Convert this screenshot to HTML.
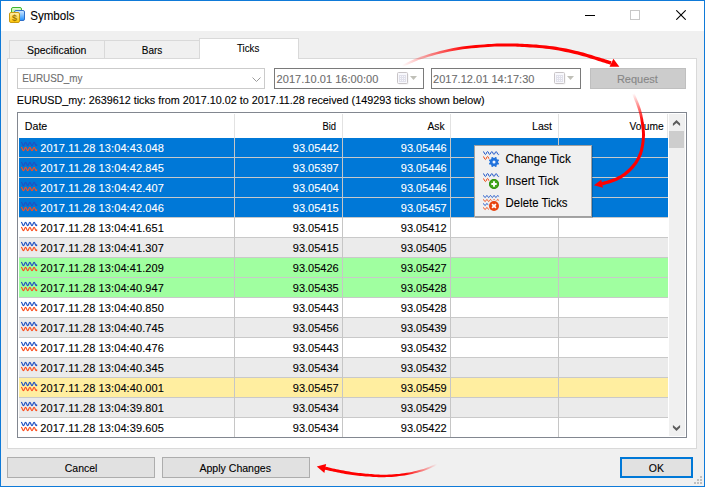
<!DOCTYPE html>
<html><head><meta charset="utf-8"><title>Symbols</title>
<style>
html,body{margin:0;padding:0;}
body{-webkit-text-stroke:0.1px;width:705px;height:487px;overflow:hidden;background:#f0f0f0;position:relative;font-family:"Liberation Sans",sans-serif;font-size:11px;color:#000;}
div,span,svg{position:absolute;box-sizing:border-box;}
.t{white-space:nowrap;line-height:13px;height:13px;}
.t12{white-space:nowrap;font-size:12px;line-height:15px;height:15px;}
#win{left:0;top:0;width:705px;height:487px;border:1px solid #0f7ad8;background:#f0f0f0;}
#titlebar{left:1px;top:1px;width:703px;height:30px;background:#fff;}
#panel{left:7px;top:58px;width:690px;height:391px;background:#fff;border:1px solid #d9d9d9;}
.tab{top:40px;height:19px;border:1px solid #d9d9d9;background:#f0f0f0;}
#tab3{left:199px;top:38px;width:100px;height:21px;background:#fff;border:1px solid #d9d9d9;border-bottom:none;}
#combo{left:17px;top:68px;width:248px;height:21px;border:1px solid #cbcbcb;background:#fff;}
.date{top:68px;width:150px;height:21px;border:1px solid #7a7a7a;background:#fff;}
.grey{color:#6d6d6d;}
#req{left:590px;top:68px;width:96px;height:21px;background:#cccccc;border:1px solid #bfbfbf;}
#table{left:17px;top:112px;width:670px;height:326px;border:1px solid #828790;background:#fff;}
.row{left:19px;width:649px;height:19px;}
.row.sel{background:#0078d7;color:#fff;}
.row.w{background:#fff;}
.row.g{background:#ebebeb;}
.row.grn{background:#a0ffa0;}
.row.yel{background:#ffeea0;}
.hl{left:19px;width:649px;height:1px;background:#c9c9c9;}
.vl{top:138px;width:1px;height:299px;background:#c6c6c6;}
.vh{top:114px;width:1px;height:24px;background:#e2e2e2;}
.wv{left:2px;top:0px;}
.c{line-height:13px;height:13px;white-space:nowrap;}
.c.rd{left:21px;top:4px;letter-spacing:0.1px;transform:translateX(0.20px) scaleX(1);transform-origin:0 0;}
.c.rb{left:273px;top:4px;letter-spacing:0px;transform:translateX(0.80px) scaleX(1);transform-origin:0 0;}
.c.ra{left:381px;top:4px;letter-spacing:0px;transform:translateX(0.80px) scaleX(1);transform-origin:0 0;}
.btn{top:457px;height:21px;background:#e1e1e1;border:1px solid #adadad;}
#menu{left:474px;top:145px;width:118px;height:72px;background:#f0f0f0;border:1px solid #a0a0a0;box-shadow:1px 1px 0 rgba(0,0,0,0.18);}
.mic{left:8px;}
</style></head><body>
<div id="win"></div>
<div id="titlebar"></div>
<svg style="left:9px;top:7px" width="17" height="17" viewBox="0 0 17 17">
 <defs>
  <linearGradient id="gg" x1="0" y1="0" x2="0" y2="1"><stop offset="0" stop-color="#e8ffd8"/><stop offset="1" stop-color="#7fd85f"/></linearGradient>
  <linearGradient id="gb" x1="0" y1="0" x2="0" y2="1"><stop offset="0" stop-color="#d8ecff"/><stop offset="1" stop-color="#1e90ff"/></linearGradient>
  <linearGradient id="gy" x1="0" y1="0" x2="0" y2="1"><stop offset="0" stop-color="#fff0b0"/><stop offset="1" stop-color="#ffc400"/></linearGradient>
 </defs>
 <rect x="2.5" y="0.5" width="10" height="9" rx="1.5" fill="url(#gg)" stroke="#3fb52f"/>
 <rect x="5.5" y="3.5" width="10" height="10" rx="1.5" fill="url(#gb)" stroke="#2f6fc8"/>
 <rect x="0.5" y="5.5" width="10" height="10" rx="1.5" fill="url(#gy)" stroke="#c89a10"/>
 <text x="5.5" y="13.6" font-family="Liberation Sans, sans-serif" font-size="9" font-weight="bold" fill="#a07800" text-anchor="middle">$</text>
</svg>
<div class="t12" id="title" style="left:30px;top:9px;letter-spacing:0px;transform:translateX(0.20px) scaleX(0.9641);transform-origin:0 0;">Symbols</div>
<svg style="left:585px;top:10px" width="55" height="10" viewBox="0 0 55 10" shape-rendering="crispEdges">
 <rect x="0" y="5" width="10" height="1" fill="#000"/>
 <rect x="45.5" y="0.5" width="9" height="9" fill="none" stroke="#c8c8c8"/>
</svg>
<svg style="left:676px;top:10px" width="10" height="10" viewBox="0 0 10 10">
 <path d="M0.3 0.3 L9.7 9.7 M9.7 0.3 L0.3 9.7" stroke="#000" stroke-width="1.1" fill="none"/>
</svg>

<div id="panel"></div>
<div class="tab" id="tab1" style="left:9px;width:96px"></div>
<div class="tab" id="tab2" style="left:104px;width:96px"></div>
<div id="tab3"></div>
<span class="t" id="spec" style="left:27px;top:44px;letter-spacing:0px;transform:translateX(0.00px) scaleX(0.9516);transform-origin:0 0;">Specification</span>
<span class="t" id="bars" style="left:141px;top:44px;letter-spacing:0px;transform:translateX(0.80px) scaleX(0.9087);transform-origin:0 0;">Bars</span>
<span class="t" id="ticks" style="left:237px;top:42px;letter-spacing:0px;transform:translateX(0.00px) scaleX(0.88);transform-origin:0 0;">Ticks</span>

<div id="combo">
<svg style="left:234px;top:8px" width="9" height="5" viewBox="0 0 9 5"><path d="M0.5 0.5 L4.5 4.5 L8.5 0.5" fill="none" stroke="#9a9a9a" stroke-width="1"/></svg>
</div>
<span class="t grey" id="combot" style="left:22px;top:72px;letter-spacing:0px;transform:translateX(0.20px) scaleX(0.897);transform-origin:0 0;">EURUSD_my</span>
<div class="date" style="left:274px"><svg style="left:122px;top:3px" width="22" height="13" viewBox="0 0 22 13"><rect x="1.5" y="1.5" width="10" height="11" rx="1" fill="#e4e4e4" opacity="0.6"/><rect x="0.5" y="0.5" width="10" height="11" rx="1" fill="#f8f8fc" stroke="#c8c4c6"/><path d="M2.5 3v7M4.5 3v7M6.5 3v7M8.5 3v7M2 3.5h7M2 5.5h7M2 7.5h7M2 9.5h7" stroke="#e0e0ea" stroke-width="1" fill="none"/><path d="M13 4 L20 4 L16.5 8 Z" fill="#c0c0b8"/></svg></div>
<div class="date" style="left:431px"><svg style="left:122px;top:3px" width="22" height="13" viewBox="0 0 22 13"><rect x="1.5" y="1.5" width="10" height="11" rx="1" fill="#e4e4e4" opacity="0.6"/><rect x="0.5" y="0.5" width="10" height="11" rx="1" fill="#f8f8fc" stroke="#c8c4c6"/><path d="M2.5 3v7M4.5 3v7M6.5 3v7M8.5 3v7M2 3.5h7M2 5.5h7M2 7.5h7M2 9.5h7" stroke="#e0e0ea" stroke-width="1" fill="none"/><path d="M13 4 L20 4 L16.5 8 Z" fill="#c0c0b8"/></svg></div>
<span class="t grey" id="date1" style="left:276px;top:73px;letter-spacing:0.044px;transform:translateX(0.60px) scaleX(1);transform-origin:0 0;">2017.10.01 16:00:00</span>
<span class="t grey" id="date2" style="left:433px;top:73px;letter-spacing:0.028px;">2017.12.01 14:17:30</span>
<div id="req"></div>
<span class="t" id="reqt" style="left:616px;top:73px;letter-spacing:0px;transform:translateX(0.90px) scaleX(1);transform-origin:0 0;color:#868686;">Request</span>
<div class="t" id="info" style="left:16px;top:94px;letter-spacing:0px;transform:translateX(0.80px) scaleX(0.98);transform-origin:0 0;">EURUSD_my: 2639612 ticks from 2017.10.02 to 2017.11.28 received (149293 ticks shown below)</div>

<div id="table"></div>
<span class="t" id="hDate" style="left:24px;top:120px;letter-spacing:0px;transform:translateX(0.80px) scaleX(0.9674);transform-origin:0 0;">Date</span>
<span class="t" id="hBid" style="left:322px;top:120px;letter-spacing:0px;transform:translateX(0.40px) scaleX(0.8563);transform-origin:0 0;">Bid</span>
<span class="t" id="hAsk" style="left:427px;top:120px;letter-spacing:0px;transform:translateX(0.40px) scaleX(0.9361);transform-origin:0 0;">Ask</span>
<span class="t" id="hLast" style="left:532px;top:120px;letter-spacing:0px;transform:translateX(0.00px) scaleX(0.9619);transform-origin:0 0;">Last</span>
<span class="t" id="hVol" style="left:629px;top:120px;letter-spacing:0px;transform:translateX(0.50px) scaleX(0.93);transform-origin:0 0;">Volume</span>
<div class="row sel" style="top:138px"><svg class="wv" width="17" height="16" viewBox="0 0 17 16"><path d="M0.30 4.45 C1.26 4.45 1.47 7.55 2.43 7.55 C3.40 7.55 3.61 4.45 4.57 4.45 C5.53 4.45 5.74 7.55 6.70 7.55 C7.67 7.55 7.88 4.45 8.84 4.45 C9.80 4.45 10.01 7.55 10.97 7.55 C11.94 7.55 12.15 4.45 13.11 4.45 C14.07 4.45 14.28 7.55 15.24 7.55 C16.21 7.55 15.50 6.89 15.70 6.89" fill="none" stroke="#2052c2" stroke-width="1.18" stroke-linecap="round"/><path d="M0.30 9.45 C1.26 9.45 1.47 12.55 2.43 12.55 C3.40 12.55 3.61 9.45 4.57 9.45 C5.53 9.45 5.74 12.55 6.70 12.55 C7.67 12.55 7.88 9.45 8.84 9.45 C9.80 9.45 10.01 12.55 10.97 12.55 C11.94 12.55 12.15 9.45 13.11 9.45 C14.07 9.45 14.28 12.55 15.24 12.55 C16.21 12.55 15.50 11.89 15.70 11.89" fill="none" stroke="#fb4e1e" stroke-width="1.18" stroke-linecap="round"/></svg><span class="c rd">2017.11.28 13:04:43.048</span><span class="c rb">93.05442</span><span class="c ra">93.05446</span></div>
<div class="row sel" style="top:158px"><svg class="wv" width="17" height="16" viewBox="0 0 17 16"><path d="M0.30 4.45 C1.26 4.45 1.47 7.55 2.43 7.55 C3.40 7.55 3.61 4.45 4.57 4.45 C5.53 4.45 5.74 7.55 6.70 7.55 C7.67 7.55 7.88 4.45 8.84 4.45 C9.80 4.45 10.01 7.55 10.97 7.55 C11.94 7.55 12.15 4.45 13.11 4.45 C14.07 4.45 14.28 7.55 15.24 7.55 C16.21 7.55 15.50 6.89 15.70 6.89" fill="none" stroke="#2052c2" stroke-width="1.18" stroke-linecap="round"/><path d="M0.30 9.45 C1.26 9.45 1.47 12.55 2.43 12.55 C3.40 12.55 3.61 9.45 4.57 9.45 C5.53 9.45 5.74 12.55 6.70 12.55 C7.67 12.55 7.88 9.45 8.84 9.45 C9.80 9.45 10.01 12.55 10.97 12.55 C11.94 12.55 12.15 9.45 13.11 9.45 C14.07 9.45 14.28 12.55 15.24 12.55 C16.21 12.55 15.50 11.89 15.70 11.89" fill="none" stroke="#fb4e1e" stroke-width="1.18" stroke-linecap="round"/></svg><span class="c rd">2017.11.28 13:04:42.845</span><span class="c rb">93.05397</span><span class="c ra">93.05446</span></div>
<div class="row sel" style="top:178px"><svg class="wv" width="17" height="16" viewBox="0 0 17 16"><path d="M0.30 4.45 C1.26 4.45 1.47 7.55 2.43 7.55 C3.40 7.55 3.61 4.45 4.57 4.45 C5.53 4.45 5.74 7.55 6.70 7.55 C7.67 7.55 7.88 4.45 8.84 4.45 C9.80 4.45 10.01 7.55 10.97 7.55 C11.94 7.55 12.15 4.45 13.11 4.45 C14.07 4.45 14.28 7.55 15.24 7.55 C16.21 7.55 15.50 6.89 15.70 6.89" fill="none" stroke="#2052c2" stroke-width="1.18" stroke-linecap="round"/><path d="M0.30 9.45 C1.26 9.45 1.47 12.55 2.43 12.55 C3.40 12.55 3.61 9.45 4.57 9.45 C5.53 9.45 5.74 12.55 6.70 12.55 C7.67 12.55 7.88 9.45 8.84 9.45 C9.80 9.45 10.01 12.55 10.97 12.55 C11.94 12.55 12.15 9.45 13.11 9.45 C14.07 9.45 14.28 12.55 15.24 12.55 C16.21 12.55 15.50 11.89 15.70 11.89" fill="none" stroke="#fb4e1e" stroke-width="1.18" stroke-linecap="round"/></svg><span class="c rd">2017.11.28 13:04:42.407</span><span class="c rb">93.05404</span><span class="c ra">93.05446</span></div>
<div class="row sel" style="top:198px"><svg class="wv" width="17" height="16" viewBox="0 0 17 16"><path d="M0.30 4.45 C1.26 4.45 1.47 7.55 2.43 7.55 C3.40 7.55 3.61 4.45 4.57 4.45 C5.53 4.45 5.74 7.55 6.70 7.55 C7.67 7.55 7.88 4.45 8.84 4.45 C9.80 4.45 10.01 7.55 10.97 7.55 C11.94 7.55 12.15 4.45 13.11 4.45 C14.07 4.45 14.28 7.55 15.24 7.55 C16.21 7.55 15.50 6.89 15.70 6.89" fill="none" stroke="#2052c2" stroke-width="1.18" stroke-linecap="round"/><path d="M0.30 9.45 C1.26 9.45 1.47 12.55 2.43 12.55 C3.40 12.55 3.61 9.45 4.57 9.45 C5.53 9.45 5.74 12.55 6.70 12.55 C7.67 12.55 7.88 9.45 8.84 9.45 C9.80 9.45 10.01 12.55 10.97 12.55 C11.94 12.55 12.15 9.45 13.11 9.45 C14.07 9.45 14.28 12.55 15.24 12.55 C16.21 12.55 15.50 11.89 15.70 11.89" fill="none" stroke="#fb4e1e" stroke-width="1.18" stroke-linecap="round"/></svg><span class="c rd">2017.11.28 13:04:42.046</span><span class="c rb">93.05415</span><span class="c ra">93.05457</span></div>
<div class="row w" style="top:218px"><svg class="wv" width="17" height="16" viewBox="0 0 17 16"><path d="M0.30 4.45 C1.26 4.45 1.47 7.55 2.43 7.55 C3.40 7.55 3.61 4.45 4.57 4.45 C5.53 4.45 5.74 7.55 6.70 7.55 C7.67 7.55 7.88 4.45 8.84 4.45 C9.80 4.45 10.01 7.55 10.97 7.55 C11.94 7.55 12.15 4.45 13.11 4.45 C14.07 4.45 14.28 7.55 15.24 7.55 C16.21 7.55 15.50 6.89 15.70 6.89" fill="none" stroke="#2052c2" stroke-width="1.18" stroke-linecap="round"/><path d="M0.30 9.45 C1.26 9.45 1.47 12.55 2.43 12.55 C3.40 12.55 3.61 9.45 4.57 9.45 C5.53 9.45 5.74 12.55 6.70 12.55 C7.67 12.55 7.88 9.45 8.84 9.45 C9.80 9.45 10.01 12.55 10.97 12.55 C11.94 12.55 12.15 9.45 13.11 9.45 C14.07 9.45 14.28 12.55 15.24 12.55 C16.21 12.55 15.50 11.89 15.70 11.89" fill="none" stroke="#fb4e1e" stroke-width="1.18" stroke-linecap="round"/></svg><span class="c rd">2017.11.28 13:04:41.651</span><span class="c rb">93.05415</span><span class="c ra">93.05412</span></div>
<div class="row g" style="top:238px"><svg class="wv" width="17" height="16" viewBox="0 0 17 16"><path d="M0.30 4.45 C1.26 4.45 1.47 7.55 2.43 7.55 C3.40 7.55 3.61 4.45 4.57 4.45 C5.53 4.45 5.74 7.55 6.70 7.55 C7.67 7.55 7.88 4.45 8.84 4.45 C9.80 4.45 10.01 7.55 10.97 7.55 C11.94 7.55 12.15 4.45 13.11 4.45 C14.07 4.45 14.28 7.55 15.24 7.55 C16.21 7.55 15.50 6.89 15.70 6.89" fill="none" stroke="#2052c2" stroke-width="1.18" stroke-linecap="round"/><path d="M0.30 9.45 C1.26 9.45 1.47 12.55 2.43 12.55 C3.40 12.55 3.61 9.45 4.57 9.45 C5.53 9.45 5.74 12.55 6.70 12.55 C7.67 12.55 7.88 9.45 8.84 9.45 C9.80 9.45 10.01 12.55 10.97 12.55 C11.94 12.55 12.15 9.45 13.11 9.45 C14.07 9.45 14.28 12.55 15.24 12.55 C16.21 12.55 15.50 11.89 15.70 11.89" fill="none" stroke="#fb4e1e" stroke-width="1.18" stroke-linecap="round"/></svg><span class="c rd">2017.11.28 13:04:41.307</span><span class="c rb">93.05415</span><span class="c ra">93.05405</span></div>
<div class="row grn" style="top:258px"><svg class="wv" width="17" height="16" viewBox="0 0 17 16"><path d="M0.30 4.45 C1.26 4.45 1.47 7.55 2.43 7.55 C3.40 7.55 3.61 4.45 4.57 4.45 C5.53 4.45 5.74 7.55 6.70 7.55 C7.67 7.55 7.88 4.45 8.84 4.45 C9.80 4.45 10.01 7.55 10.97 7.55 C11.94 7.55 12.15 4.45 13.11 4.45 C14.07 4.45 14.28 7.55 15.24 7.55 C16.21 7.55 15.50 6.89 15.70 6.89" fill="none" stroke="#2052c2" stroke-width="1.18" stroke-linecap="round"/><path d="M0.30 9.45 C1.26 9.45 1.47 12.55 2.43 12.55 C3.40 12.55 3.61 9.45 4.57 9.45 C5.53 9.45 5.74 12.55 6.70 12.55 C7.67 12.55 7.88 9.45 8.84 9.45 C9.80 9.45 10.01 12.55 10.97 12.55 C11.94 12.55 12.15 9.45 13.11 9.45 C14.07 9.45 14.28 12.55 15.24 12.55 C16.21 12.55 15.50 11.89 15.70 11.89" fill="none" stroke="#fb4e1e" stroke-width="1.18" stroke-linecap="round"/></svg><span class="c rd">2017.11.28 13:04:41.209</span><span class="c rb">93.05426</span><span class="c ra">93.05427</span></div>
<div class="row grn" style="top:278px"><svg class="wv" width="17" height="16" viewBox="0 0 17 16"><path d="M0.30 4.45 C1.26 4.45 1.47 7.55 2.43 7.55 C3.40 7.55 3.61 4.45 4.57 4.45 C5.53 4.45 5.74 7.55 6.70 7.55 C7.67 7.55 7.88 4.45 8.84 4.45 C9.80 4.45 10.01 7.55 10.97 7.55 C11.94 7.55 12.15 4.45 13.11 4.45 C14.07 4.45 14.28 7.55 15.24 7.55 C16.21 7.55 15.50 6.89 15.70 6.89" fill="none" stroke="#2052c2" stroke-width="1.18" stroke-linecap="round"/><path d="M0.30 9.45 C1.26 9.45 1.47 12.55 2.43 12.55 C3.40 12.55 3.61 9.45 4.57 9.45 C5.53 9.45 5.74 12.55 6.70 12.55 C7.67 12.55 7.88 9.45 8.84 9.45 C9.80 9.45 10.01 12.55 10.97 12.55 C11.94 12.55 12.15 9.45 13.11 9.45 C14.07 9.45 14.28 12.55 15.24 12.55 C16.21 12.55 15.50 11.89 15.70 11.89" fill="none" stroke="#fb4e1e" stroke-width="1.18" stroke-linecap="round"/></svg><span class="c rd">2017.11.28 13:04:40.947</span><span class="c rb">93.05435</span><span class="c ra">93.05428</span></div>
<div class="row w" style="top:298px"><svg class="wv" width="17" height="16" viewBox="0 0 17 16"><path d="M0.30 4.45 C1.26 4.45 1.47 7.55 2.43 7.55 C3.40 7.55 3.61 4.45 4.57 4.45 C5.53 4.45 5.74 7.55 6.70 7.55 C7.67 7.55 7.88 4.45 8.84 4.45 C9.80 4.45 10.01 7.55 10.97 7.55 C11.94 7.55 12.15 4.45 13.11 4.45 C14.07 4.45 14.28 7.55 15.24 7.55 C16.21 7.55 15.50 6.89 15.70 6.89" fill="none" stroke="#2052c2" stroke-width="1.18" stroke-linecap="round"/><path d="M0.30 9.45 C1.26 9.45 1.47 12.55 2.43 12.55 C3.40 12.55 3.61 9.45 4.57 9.45 C5.53 9.45 5.74 12.55 6.70 12.55 C7.67 12.55 7.88 9.45 8.84 9.45 C9.80 9.45 10.01 12.55 10.97 12.55 C11.94 12.55 12.15 9.45 13.11 9.45 C14.07 9.45 14.28 12.55 15.24 12.55 C16.21 12.55 15.50 11.89 15.70 11.89" fill="none" stroke="#fb4e1e" stroke-width="1.18" stroke-linecap="round"/></svg><span class="c rd">2017.11.28 13:04:40.850</span><span class="c rb">93.05443</span><span class="c ra">93.05428</span></div>
<div class="row g" style="top:318px"><svg class="wv" width="17" height="16" viewBox="0 0 17 16"><path d="M0.30 4.45 C1.26 4.45 1.47 7.55 2.43 7.55 C3.40 7.55 3.61 4.45 4.57 4.45 C5.53 4.45 5.74 7.55 6.70 7.55 C7.67 7.55 7.88 4.45 8.84 4.45 C9.80 4.45 10.01 7.55 10.97 7.55 C11.94 7.55 12.15 4.45 13.11 4.45 C14.07 4.45 14.28 7.55 15.24 7.55 C16.21 7.55 15.50 6.89 15.70 6.89" fill="none" stroke="#2052c2" stroke-width="1.18" stroke-linecap="round"/><path d="M0.30 9.45 C1.26 9.45 1.47 12.55 2.43 12.55 C3.40 12.55 3.61 9.45 4.57 9.45 C5.53 9.45 5.74 12.55 6.70 12.55 C7.67 12.55 7.88 9.45 8.84 9.45 C9.80 9.45 10.01 12.55 10.97 12.55 C11.94 12.55 12.15 9.45 13.11 9.45 C14.07 9.45 14.28 12.55 15.24 12.55 C16.21 12.55 15.50 11.89 15.70 11.89" fill="none" stroke="#fb4e1e" stroke-width="1.18" stroke-linecap="round"/></svg><span class="c rd">2017.11.28 13:04:40.745</span><span class="c rb">93.05456</span><span class="c ra">93.05439</span></div>
<div class="row w" style="top:338px"><svg class="wv" width="17" height="16" viewBox="0 0 17 16"><path d="M0.30 4.45 C1.26 4.45 1.47 7.55 2.43 7.55 C3.40 7.55 3.61 4.45 4.57 4.45 C5.53 4.45 5.74 7.55 6.70 7.55 C7.67 7.55 7.88 4.45 8.84 4.45 C9.80 4.45 10.01 7.55 10.97 7.55 C11.94 7.55 12.15 4.45 13.11 4.45 C14.07 4.45 14.28 7.55 15.24 7.55 C16.21 7.55 15.50 6.89 15.70 6.89" fill="none" stroke="#2052c2" stroke-width="1.18" stroke-linecap="round"/><path d="M0.30 9.45 C1.26 9.45 1.47 12.55 2.43 12.55 C3.40 12.55 3.61 9.45 4.57 9.45 C5.53 9.45 5.74 12.55 6.70 12.55 C7.67 12.55 7.88 9.45 8.84 9.45 C9.80 9.45 10.01 12.55 10.97 12.55 C11.94 12.55 12.15 9.45 13.11 9.45 C14.07 9.45 14.28 12.55 15.24 12.55 C16.21 12.55 15.50 11.89 15.70 11.89" fill="none" stroke="#fb4e1e" stroke-width="1.18" stroke-linecap="round"/></svg><span class="c rd">2017.11.28 13:04:40.476</span><span class="c rb">93.05443</span><span class="c ra">93.05432</span></div>
<div class="row g" style="top:358px"><svg class="wv" width="17" height="16" viewBox="0 0 17 16"><path d="M0.30 4.45 C1.26 4.45 1.47 7.55 2.43 7.55 C3.40 7.55 3.61 4.45 4.57 4.45 C5.53 4.45 5.74 7.55 6.70 7.55 C7.67 7.55 7.88 4.45 8.84 4.45 C9.80 4.45 10.01 7.55 10.97 7.55 C11.94 7.55 12.15 4.45 13.11 4.45 C14.07 4.45 14.28 7.55 15.24 7.55 C16.21 7.55 15.50 6.89 15.70 6.89" fill="none" stroke="#2052c2" stroke-width="1.18" stroke-linecap="round"/><path d="M0.30 9.45 C1.26 9.45 1.47 12.55 2.43 12.55 C3.40 12.55 3.61 9.45 4.57 9.45 C5.53 9.45 5.74 12.55 6.70 12.55 C7.67 12.55 7.88 9.45 8.84 9.45 C9.80 9.45 10.01 12.55 10.97 12.55 C11.94 12.55 12.15 9.45 13.11 9.45 C14.07 9.45 14.28 12.55 15.24 12.55 C16.21 12.55 15.50 11.89 15.70 11.89" fill="none" stroke="#fb4e1e" stroke-width="1.18" stroke-linecap="round"/></svg><span class="c rd">2017.11.28 13:04:40.345</span><span class="c rb">93.05434</span><span class="c ra">93.05432</span></div>
<div class="row yel" style="top:378px"><svg class="wv" width="17" height="16" viewBox="0 0 17 16"><path d="M0.30 4.45 C1.26 4.45 1.47 7.55 2.43 7.55 C3.40 7.55 3.61 4.45 4.57 4.45 C5.53 4.45 5.74 7.55 6.70 7.55 C7.67 7.55 7.88 4.45 8.84 4.45 C9.80 4.45 10.01 7.55 10.97 7.55 C11.94 7.55 12.15 4.45 13.11 4.45 C14.07 4.45 14.28 7.55 15.24 7.55 C16.21 7.55 15.50 6.89 15.70 6.89" fill="none" stroke="#2052c2" stroke-width="1.18" stroke-linecap="round"/><path d="M0.30 9.45 C1.26 9.45 1.47 12.55 2.43 12.55 C3.40 12.55 3.61 9.45 4.57 9.45 C5.53 9.45 5.74 12.55 6.70 12.55 C7.67 12.55 7.88 9.45 8.84 9.45 C9.80 9.45 10.01 12.55 10.97 12.55 C11.94 12.55 12.15 9.45 13.11 9.45 C14.07 9.45 14.28 12.55 15.24 12.55 C16.21 12.55 15.50 11.89 15.70 11.89" fill="none" stroke="#fb4e1e" stroke-width="1.18" stroke-linecap="round"/></svg><span class="c rd">2017.11.28 13:04:40.001</span><span class="c rb">93.05457</span><span class="c ra">93.05459</span></div>
<div class="row g" style="top:398px"><svg class="wv" width="17" height="16" viewBox="0 0 17 16"><path d="M0.30 4.45 C1.26 4.45 1.47 7.55 2.43 7.55 C3.40 7.55 3.61 4.45 4.57 4.45 C5.53 4.45 5.74 7.55 6.70 7.55 C7.67 7.55 7.88 4.45 8.84 4.45 C9.80 4.45 10.01 7.55 10.97 7.55 C11.94 7.55 12.15 4.45 13.11 4.45 C14.07 4.45 14.28 7.55 15.24 7.55 C16.21 7.55 15.50 6.89 15.70 6.89" fill="none" stroke="#2052c2" stroke-width="1.18" stroke-linecap="round"/><path d="M0.30 9.45 C1.26 9.45 1.47 12.55 2.43 12.55 C3.40 12.55 3.61 9.45 4.57 9.45 C5.53 9.45 5.74 12.55 6.70 12.55 C7.67 12.55 7.88 9.45 8.84 9.45 C9.80 9.45 10.01 12.55 10.97 12.55 C11.94 12.55 12.15 9.45 13.11 9.45 C14.07 9.45 14.28 12.55 15.24 12.55 C16.21 12.55 15.50 11.89 15.70 11.89" fill="none" stroke="#fb4e1e" stroke-width="1.18" stroke-linecap="round"/></svg><span class="c rd">2017.11.28 13:04:39.801</span><span class="c rb">93.05434</span><span class="c ra">93.05429</span></div>
<div class="row w" style="top:418px"><svg class="wv" width="17" height="16" viewBox="0 0 17 16"><path d="M0.30 4.45 C1.26 4.45 1.47 7.55 2.43 7.55 C3.40 7.55 3.61 4.45 4.57 4.45 C5.53 4.45 5.74 7.55 6.70 7.55 C7.67 7.55 7.88 4.45 8.84 4.45 C9.80 4.45 10.01 7.55 10.97 7.55 C11.94 7.55 12.15 4.45 13.11 4.45 C14.07 4.45 14.28 7.55 15.24 7.55 C16.21 7.55 15.50 6.89 15.70 6.89" fill="none" stroke="#2052c2" stroke-width="1.18" stroke-linecap="round"/><path d="M0.30 9.45 C1.26 9.45 1.47 12.55 2.43 12.55 C3.40 12.55 3.61 9.45 4.57 9.45 C5.53 9.45 5.74 12.55 6.70 12.55 C7.67 12.55 7.88 9.45 8.84 9.45 C9.80 9.45 10.01 12.55 10.97 12.55 C11.94 12.55 12.15 9.45 13.11 9.45 C14.07 9.45 14.28 12.55 15.24 12.55 C16.21 12.55 15.50 11.89 15.70 11.89" fill="none" stroke="#fb4e1e" stroke-width="1.18" stroke-linecap="round"/></svg><span class="c rd">2017.11.28 13:04:39.605</span><span class="c rb">93.05434</span><span class="c ra">93.05422</span></div>
<div class="hl" style="top:157px"></div>
<div class="hl" style="top:177px"></div>
<div class="hl" style="top:197px"></div>
<div class="hl" style="top:217px"></div>
<div class="hl" style="top:237px"></div>
<div class="hl" style="top:257px"></div>
<div class="hl" style="top:277px"></div>
<div class="hl" style="top:297px"></div>
<div class="hl" style="top:317px"></div>
<div class="hl" style="top:337px"></div>
<div class="hl" style="top:357px"></div>
<div class="hl" style="top:377px"></div>
<div class="hl" style="top:397px"></div>
<div class="hl" style="top:417px"></div>
<div class="vl" style="left:234px"></div>
<div class="vl" style="left:342px"></div>
<div class="vl" style="left:450px"></div>
<div class="vl" style="left:558px"></div>
<div class="vh" style="left:234px"></div>
<div class="vh" style="left:342px"></div>
<div class="vh" style="left:450px"></div>
<div class="vh" style="left:558px"></div>
<div class="vh" style="left:667px;background:#e5e5e5"></div>
<div id="sb" style="left:669px;top:114px;width:16px;height:322px;background:#f0f0f0"></div>
<div id="thumb" style="left:669px;top:131px;width:15px;height:17px;background:#cdcdcd"></div>
<svg style="left:672px;top:119px" width="9" height="8" viewBox="0 0 9 8"><path d="M4.5 0.9 L8.1 4.5 L8.1 6.9 L4.5 4.1 L0.9 6.9 L0.9 4.5 Z" fill="#5c5c5c"/></svg>
<svg style="left:672px;top:424px" width="9" height="8" viewBox="0 0 9 8"><path d="M4.5 7.1 L8.1 3.5 L8.1 1.1 L4.5 3.9 L0.9 1.1 L0.9 3.5 Z" fill="#5c5c5c"/></svg>

<div id="menu">
<svg class="mic" style="top:5px" width="17" height="17" viewBox="0 0 17 17"><path d="M0.30 0.45 C1.26 0.45 1.47 3.55 2.43 3.55 C3.40 3.55 3.61 0.45 4.57 0.45 C5.53 0.45 5.74 3.55 6.70 3.55 C7.67 3.55 7.88 0.45 8.84 0.45 C9.80 0.45 10.01 3.55 10.97 3.55 C11.94 3.55 12.15 0.45 13.11 0.45 C14.07 0.45 14.28 3.55 15.24 3.55 C16.21 3.55 15.50 2.89 15.70 2.89" fill="none" stroke="#2b5fcb" stroke-width="1.0" stroke-linecap="round"/><path d="M0.30 5.45 C1.26 5.45 1.47 8.55 2.43 8.55 C3.40 8.55 3.61 5.45 4.57 5.45 C5.53 5.45 5.69 8.40 6.60 8.40" fill="none" stroke="#f0541e" stroke-width="1.0" stroke-linecap="round"/><circle cx="11" cy="11" r="5.9" fill="#f0f0f0"/><path d="M16.07 12.15 L15.40 13.77 L14.16 13.62 L13.62 14.16 L13.77 15.40 L12.15 16.07 L11.38 15.08 L10.62 15.08 L9.85 16.07 L8.23 15.40 L8.38 14.16 L7.84 13.62 L6.60 13.77 L5.93 12.15 L6.92 11.38 L6.92 10.62 L5.93 9.85 L6.60 8.23 L7.84 8.38 L8.38 7.84 L8.23 6.60 L9.85 5.93 L10.62 6.92 L11.38 6.92 L12.15 5.93 L13.77 6.60 L13.62 7.84 L14.16 8.38 L15.40 8.23 L16.07 9.85 L15.08 10.62 L15.08 11.38Z" fill="#2273dc"/><circle cx="11" cy="11" r="1.5" fill="#eef4ff"/></svg><svg class="mic" style="top:27px" width="17" height="17" viewBox="0 0 17 17"><path d="M0.30 0.45 C1.26 0.45 1.47 3.55 2.43 3.55 C3.40 3.55 3.61 0.45 4.57 0.45 C5.53 0.45 5.74 3.55 6.70 3.55 C7.67 3.55 7.88 0.45 8.84 0.45 C9.80 0.45 10.01 3.55 10.97 3.55 C11.94 3.55 12.15 0.45 13.11 0.45 C14.07 0.45 14.28 3.55 15.24 3.55 C16.21 3.55 15.50 2.89 15.70 2.89" fill="none" stroke="#2b5fcb" stroke-width="1.0" stroke-linecap="round"/><path d="M0.30 5.45 C1.26 5.45 1.47 8.55 2.43 8.55 C3.40 8.55 3.61 5.45 4.57 5.45 C5.53 5.45 5.69 8.40 6.60 8.40" fill="none" stroke="#f0541e" stroke-width="1.0" stroke-linecap="round"/><circle cx="11" cy="11" r="5.9" fill="#f0f0f0"/><circle cx="11" cy="11" r="5" fill="#43a81c"/><circle cx="11" cy="11" r="4.5" fill="none" stroke="#348f12" stroke-width="1"/><path d="M11 8.3v5.4M8.3 11h5.4" stroke="#fff" stroke-width="1.9" fill="none"/></svg><svg class="mic" style="top:49px" width="17" height="17" viewBox="0 0 17 17"><path d="M0.30 0.45 C1.11 0.45 1.29 2.55 2.10 2.55 C2.91 2.55 3.09 0.45 3.90 0.45 C4.71 0.45 4.89 2.55 5.70 2.55 C6.51 2.55 6.69 0.45 7.50 0.45 C8.31 0.45 8.49 2.55 9.30 2.55 C10.11 2.55 10.29 0.45 11.10 0.45 C11.91 0.45 12.09 2.55 12.90 2.55 C13.71 2.55 13.89 0.45 14.70 0.45 C15.51 0.45 15.25 1.62 15.70 1.62" fill="none" stroke="#2b5fcb" stroke-width="1.0" stroke-linecap="round"/><path d="M0.30 4.45 C1.11 4.45 1.29 6.55 2.10 6.55 C2.91 6.55 3.09 4.45 3.90 4.45 C4.71 4.45 4.89 6.55 5.70 6.55 C6.51 6.55 6.69 4.45 7.50 4.45 C8.31 4.45 8.49 6.55 9.30 6.55 C10.11 6.55 10.29 4.45 11.10 4.45 C11.91 4.45 12.09 6.55 12.90 6.55 C13.71 6.55 13.89 4.45 14.70 4.45 C15.51 4.45 15.25 5.62 15.70 5.62" fill="none" stroke="#f0541e" stroke-width="1.0" stroke-linecap="round"/><path d="M0.30 8.45 C1.11 8.45 1.29 10.55 2.10 10.55 C2.91 10.55 3.09 8.45 3.90 8.45 C4.71 8.45 4.83 10.43 5.60 10.43" fill="none" stroke="#2b5fcb" stroke-width="1.0" stroke-linecap="round"/><path d="M0.30 12.45 C1.11 12.45 1.29 14.55 2.10 14.55 C2.91 14.55 3.09 12.45 3.90 12.45 C4.71 12.45 4.83 14.43 5.60 14.43" fill="none" stroke="#f0541e" stroke-width="1.0" stroke-linecap="round"/><circle cx="11" cy="11" r="5.9" fill="#f0f0f0"/><circle cx="11" cy="11" r="5" fill="#e8440f"/><path d="M9.1 9.1l3.8 3.8M12.9 9.1l-3.8 3.8" stroke="#fff" stroke-width="1.7" fill="none"/></svg>
</div>
<span class="t12" id="m1" style="left:505px;top:152px;letter-spacing:0px;transform:translateX(0.50px) scaleX(0.98);transform-origin:0 0;">Change Tick</span>
<span class="t12" id="m2" style="left:505px;top:174px;letter-spacing:0px;transform:translateX(0.60px) scaleX(0.975);transform-origin:0 0;">Insert Tick</span>
<span class="t12" id="m3" style="left:505px;top:196px;letter-spacing:0px;transform:translateX(0.60px) scaleX(0.947);transform-origin:0 0;">Delete Ticks</span>

<div class="btn" style="left:7px;width:148px"></div>
<div class="btn" style="left:162px;width:148px"></div>
<div class="btn" style="left:620px;width:73px;border:2px solid #0078d7"></div>
<span class="t" id="cancel" style="left:64px;top:462px;letter-spacing:0px;transform:translateX(0.80px) scaleX(0.9529);transform-origin:0 0;">Cancel</span>
<span class="t" id="apply" style="left:199px;top:462px;letter-spacing:0px;transform:translateX(0.40px) scaleX(0.96);transform-origin:0 0;">Apply Changes</span>
<span class="t" id="ok" style="left:648px;top:462px;letter-spacing:0px;transform:translateX(0.80px) scaleX(0.9531);transform-origin:0 0;">OK</span>
<svg id="arrows" style="left:0;top:0;pointer-events:none" width="705" height="487" viewBox="0 0 705 487"><defs><linearGradient id="ag1" gradientUnits="userSpaceOnUse" x1="402.0" y1="66.0" x2="467.0" y2="47.4"><stop offset="0" stop-color="#ff0000" stop-opacity="0"/><stop offset="1" stop-color="#ff0000" stop-opacity="1"/></linearGradient><linearGradient id="ag2" gradientUnits="userSpaceOnUse" x1="633.3" y1="93.5" x2="642.1" y2="121.6"><stop offset="0" stop-color="#ff0000" stop-opacity="0"/><stop offset="1" stop-color="#ff0000" stop-opacity="1"/></linearGradient><linearGradient id="ag3" gradientUnits="userSpaceOnUse" x1="437.0" y1="464.2" x2="404.3" y2="474.3"><stop offset="0" stop-color="#ff0000" stop-opacity="0"/><stop offset="1" stop-color="#ff0000" stop-opacity="1"/></linearGradient></defs><path d="M402.4 66.9 L405.0 65.8 L407.6 64.7 L410.2 63.5 L412.8 62.4 L415.5 61.3 L418.4 60.1 L421.4 59.0 L424.8 57.9 L428.4 56.8 L432.3 55.7 L436.4 54.6 L440.7 53.6 L445.0 52.6 L449.5 51.6 L453.9 50.7 L458.3 50.0 L462.7 49.3 L467.1 48.8 L471.6 48.3 L476.0 47.9 L480.3 47.5 L484.4 47.3 L488.1 47.0 L491.5 46.8 L494.5 46.6 L497.1 46.5 L499.3 46.5 L501.4 46.4 L503.3 46.4 L505.2 46.4 L507.1 46.5 L509.1 46.5 L511.1 46.5 L513.2 46.6 L515.3 46.6 L517.5 46.7 L519.7 46.8 L522.0 46.9 L524.5 47.0 L527.2 47.2 L530.0 47.4 L532.9 47.6 L536.1 47.8 L539.3 48.0 L542.6 48.3 L545.8 48.7 L549.1 49.0 L552.4 49.5 L555.6 50.0 L558.9 50.6 L562.2 51.2 L565.4 51.9 L568.6 52.6 L571.7 53.2 L574.6 53.9 L577.3 54.6 L579.9 55.2 L582.2 55.9 L584.4 56.5 L586.5 57.1 L588.5 57.8 L590.5 58.4 L592.5 59.0 L594.5 59.6 L596.5 60.3 L598.5 60.9 L600.5 61.5 L602.5 62.2 L604.5 62.8 L606.5 63.4 L608.5 64.0 L610.5 64.7 L611.5 61.3 L609.5 60.7 L607.5 60.1 L605.6 59.5 L603.6 58.8 L601.6 58.2 L599.6 57.6 L597.5 57.0 L595.5 56.4 L593.5 55.7 L591.5 55.1 L589.5 54.5 L587.5 53.9 L585.4 53.3 L583.1 52.6 L580.7 52.0 L578.1 51.3 L575.4 50.7 L572.4 50.0 L569.3 49.3 L566.1 48.6 L562.8 48.0 L559.5 47.4 L556.2 46.8 L552.8 46.3 L549.5 45.9 L546.2 45.5 L542.8 45.2 L539.5 44.9 L536.3 44.6 L533.2 44.4 L530.2 44.2 L527.3 44.1 L524.7 43.9 L522.2 43.8 L519.8 43.7 L517.6 43.6 L515.4 43.6 L513.3 43.5 L511.2 43.5 L509.1 43.5 L507.1 43.5 L505.2 43.5 L503.3 43.5 L501.3 43.5 L499.3 43.5 L496.9 43.6 L494.3 43.7 L491.3 43.9 L488.0 44.1 L484.2 44.4 L480.1 44.7 L475.8 45.1 L471.3 45.5 L466.8 46.0 L462.3 46.6 L457.8 47.3 L453.4 48.1 L448.9 49.0 L444.5 50.0 L440.1 51.1 L435.8 52.2 L431.6 53.3 L427.7 54.5 L424.0 55.7 L420.6 56.8 L417.5 58.0 L414.6 59.1 L411.9 60.3 L409.3 61.5 L406.7 62.7 L404.2 63.9 L401.6 65.1Z" fill="url(#ag1)"/><polygon points="613.4,58.7 619.4,66.7 609.5,66.7" fill="#ff0000"/><path d="M632.2 94.0 L633.0 96.1 L633.9 98.3 L634.7 100.4 L635.6 102.5 L636.4 104.7 L637.1 106.8 L637.9 108.9 L638.5 111.0 L639.1 113.2 L639.6 115.3 L640.0 117.5 L640.4 119.7 L640.7 121.8 L641.0 123.9 L641.3 125.8 L641.5 127.5 L641.7 129.1 L641.8 130.6 L641.9 131.9 L642.0 133.1 L642.0 134.3 L642.0 135.5 L642.0 136.7 L641.9 138.0 L641.7 139.5 L641.6 141.0 L641.4 142.5 L641.2 144.1 L640.9 145.7 L640.6 147.2 L640.3 148.6 L640.0 150.0 L639.6 151.3 L639.3 152.4 L638.8 153.6 L638.4 154.6 L638.0 155.7 L637.5 156.7 L636.9 157.7 L636.4 158.7 L635.8 159.7 L635.2 160.7 L634.6 161.7 L633.9 162.7 L633.2 163.6 L632.4 164.6 L631.6 165.6 L630.7 166.5 L629.8 167.5 L628.8 168.5 L627.7 169.6 L626.6 170.6 L625.4 171.6 L624.3 172.5 L623.1 173.4 L622.0 174.1 L620.9 174.9 L619.8 175.5 L618.8 176.1 L617.7 176.6 L616.6 177.2 L615.5 177.7 L614.3 178.2 L613.0 178.6 L611.7 179.1 L610.4 179.6 L609.0 180.0 L607.5 180.4 L606.0 180.9 L604.5 181.3 L603.0 181.7 L601.5 182.2 L602.5 185.4 L604.0 185.0 L605.5 184.6 L607.0 184.1 L608.5 183.7 L610.0 183.2 L611.4 182.7 L612.8 182.3 L614.2 181.8 L615.5 181.2 L616.8 180.7 L618.0 180.2 L619.2 179.6 L620.3 179.0 L621.5 178.4 L622.7 177.6 L623.9 176.8 L625.1 176.0 L626.3 175.0 L627.5 174.0 L628.7 173.0 L629.9 171.9 L631.0 170.9 L632.1 169.8 L633.1 168.7 L634.0 167.7 L634.9 166.6 L635.7 165.6 L636.5 164.5 L637.2 163.5 L637.9 162.4 L638.5 161.3 L639.1 160.3 L639.7 159.2 L640.3 158.1 L640.8 157.0 L641.3 155.8 L641.8 154.7 L642.2 153.4 L642.6 152.1 L643.0 150.8 L643.3 149.3 L643.6 147.8 L643.9 146.2 L644.2 144.5 L644.4 142.9 L644.6 141.3 L644.7 139.7 L644.8 138.2 L644.9 136.8 L645.0 135.5 L645.0 134.2 L644.9 133.0 L644.9 131.7 L644.7 130.3 L644.6 128.8 L644.4 127.2 L644.1 125.4 L643.9 123.4 L643.5 121.4 L643.2 119.2 L642.7 117.0 L642.3 114.7 L641.7 112.5 L641.1 110.3 L640.4 108.1 L639.7 105.9 L638.9 103.7 L638.0 101.6 L637.1 99.4 L636.2 97.3 L635.3 95.2 L634.4 93.0Z" fill="url(#ag2)"/><polygon points="593.9,185.2 601.3,179.7 603.0,187.7" fill="#ff0000"/><path d="M436.7 463.6 L435.1 464.2 L433.6 464.9 L432.1 465.6 L430.6 466.3 L429.0 466.9 L427.3 467.6 L425.5 468.3 L423.6 468.9 L421.5 469.5 L419.2 470.1 L416.8 470.7 L414.3 471.3 L411.8 471.9 L409.2 472.4 L406.7 472.8 L404.1 473.2 L401.6 473.6 L399.1 473.9 L396.5 474.1 L394.0 474.3 L391.5 474.5 L389.1 474.6 L386.8 474.7 L384.5 474.7 L382.5 474.7 L380.5 474.7 L378.6 474.6 L376.8 474.5 L375.0 474.4 L373.3 474.3 L371.5 474.1 L369.7 474.0 L367.8 473.8 L366.0 473.7 L364.1 473.5 L362.3 473.3 L360.4 473.1 L358.6 472.9 L356.7 472.7 L354.9 472.5 L353.0 472.2 L351.2 471.9 L349.3 471.6 L347.5 471.3 L345.6 471.0 L343.8 470.6 L341.9 470.3 L340.1 469.9 L338.2 469.6 L336.4 469.2 L334.6 468.8 L332.7 468.4 L330.9 467.9 L329.0 467.5 L327.2 467.1 L325.3 466.7 L324.7 469.7 L326.5 470.1 L328.4 470.5 L330.2 470.9 L332.1 471.3 L333.9 471.7 L335.8 472.1 L337.7 472.5 L339.5 472.8 L341.4 473.2 L343.3 473.5 L345.1 473.9 L347.0 474.2 L348.9 474.5 L350.8 474.8 L352.6 475.0 L354.5 475.3 L356.4 475.5 L358.3 475.7 L360.2 475.9 L362.0 476.1 L363.9 476.2 L365.8 476.4 L367.6 476.5 L369.5 476.6 L371.3 476.8 L373.1 476.9 L374.9 477.0 L376.7 477.1 L378.5 477.2 L380.4 477.2 L382.5 477.2 L384.6 477.2 L386.8 477.1 L389.2 477.0 L391.7 476.9 L394.2 476.7 L396.7 476.4 L399.3 476.1 L401.9 475.8 L404.5 475.4 L407.1 475.0 L409.6 474.5 L412.2 473.9 L414.8 473.3 L417.3 472.7 L419.7 472.0 L422.0 471.4 L424.2 470.7 L426.1 470.0 L428.0 469.3 L429.7 468.6 L431.3 467.8 L432.8 467.1 L434.3 466.4 L435.8 465.6 L437.3 464.8Z" fill="url(#ag3)"/><polygon points="316.8,466.6 326.1,464.1 324.4,472.9" fill="#ff0000"/></svg>
<svg style="left:694px;top:476px" width="8" height="8" viewBox="0 0 8 8" shape-rendering="crispEdges"><g fill="#bfbfbf"><rect x="6" y="0" width="2" height="2"/><rect x="3" y="3" width="2" height="2"/><rect x="6" y="3" width="2" height="2"/><rect x="0" y="6" width="2" height="2"/><rect x="3" y="6" width="2" height="2"/><rect x="6" y="6" width="2" height="2"/></g></svg>
</body></html>
